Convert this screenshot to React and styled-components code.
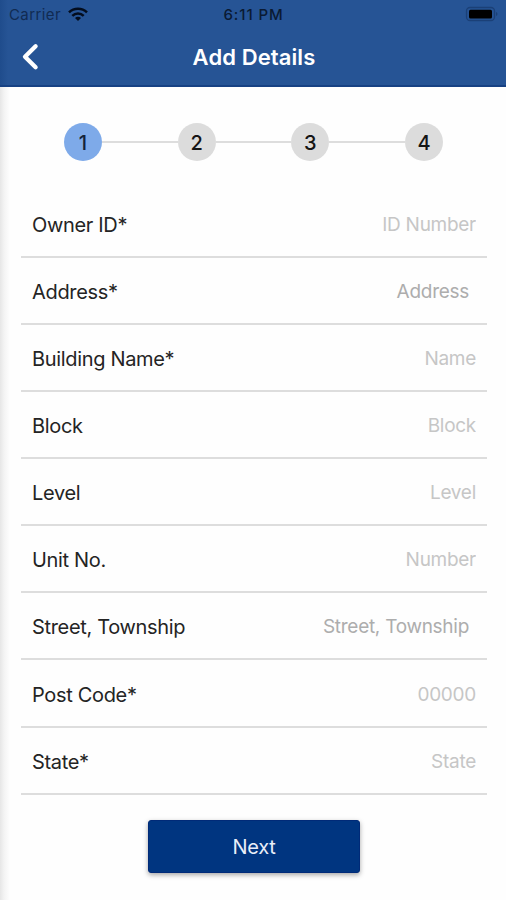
import styled, { createGlobalStyle } from 'styled-components';

const GlobalStyle = createGlobalStyle`
	* {
		box-sizing: border-box;
	}

	body {
		margin: 0;
		background: #fefefe;
		font-family: Inter, 'Liberation Sans', sans-serif;
	}
`;

const Screen = styled.main`
	width: 100%;
	height: 900px;
	overflow: hidden;
	background: linear-gradient(to right, #e6e6e6 0, #f3f3f3 4px, #fefefe 10px);
`;

const Header = styled.header`
	height: 87px;
	background: linear-gradient(to right, #1f4c8c 0, #265495 8px);
	border-bottom: 2px solid #174183;
`;

const StatusBar = styled.div`
	display: grid;
	grid-template-columns: 1fr auto 1fr;
	align-items: center;
	height: 28px;
	padding: 0 8px 0 9px;

	font-size: 15px;
	line-height: 28px;
	color: #0a1a33;
`;

const Carrier = styled.div`
	display: flex;
	align-items: center;
	gap: 7px;
	padding-top: 1px;

	color: #112b52;
	letter-spacing: .4px;

	svg {
		margin-top: -2px;
	}
`;

const Clock = styled.div`
	padding-top: 1px;
	font-weight: 500;
	letter-spacing: .9px;
`;

const Battery = styled.svg`
	justify-self: end;
	margin-top: -1px;
`;

const NavBar = styled.div`
	display: grid;
	grid-template-columns: 60px 1fr 60px;
	align-items: center;
	height: 57px;
`;

const BackButton = styled.button`
	display: flex;
	padding: 0 0 0 20px;
	border: 0;
	background: transparent;
	color: white;
	cursor: pointer;
`;

const Title = styled.h1`
	margin: 0;
	padding: 1px 0 0 2px;
	font-size: 22px;
	font-weight: 600;
	letter-spacing: .1px;
	text-align: center;
	color: white;
`;

const Steps = styled.div`
	display: flex;
	align-items: center;
	height: 38px;
	margin: 36px 63px 29.5px 64px;
`;

const Step = styled.div`
	width: 38px;
	height: 38px;
	border-radius: 50%;
	background: ${props => props.$active ? '#7eaae9' : '#dcdcdc'};

	font-size: 20px;
	font-weight: 450;
	line-height: 40px;
	text-align: center;
	color: ${props => props.$active ? '#14243c' : '#151515'};
`;

const StepLine = styled.div`
	flex: 1;
	height: 2px;
	background: #dddddd;
`;

const Form = styled.form`
	padding: 0 19px 0 21px;
`;

const Field = styled.label`
	display: flex;
	align-items: center;
	justify-content: space-between;
	height: 67.15px;
	padding: 3px ${props => props.$inset ? '18px' : '11px'} 0 11px;
	border-bottom: 2px solid #dddddd;
`;

const Label = styled.span`
	font-size: 20px;
	letter-spacing: -.33px;
	white-space: nowrap;
	color: #242424;
`;

const Input = styled.input`
	outline: none;

	width: 200px;
	padding: 0 0 1px;
	border: 0;
	background: transparent;
	font-family: inherit;
	font-size: 19px;
	letter-spacing: -.28px;
	text-align: right;

	&::placeholder {
		color: ${props => props.$dark ? '#adadad' : '#c6c6c6'};
		opacity: 1;
	}
`;

const Button = styled.button`
	display: block;
	width: 212px;
	height: 53px;
	margin: 25.5px 0 0 127px;
	padding: 0;
	border: 1px solid #002a78;
	border-radius: 3px;
	background: #003580;
	box-shadow: 0 2px 5px rgba(0, 0, 0, .35);

	font-family: inherit;
	font-size: 20px;
	letter-spacing: -.3px;
	color: #e9eef8;
	cursor: pointer;
`;

const WifiIcon = () => (
	<svg width="20" height="15" viewBox="0 0 20 15" fill="none" stroke="#030d1e" strokeWidth="2.5">
		<path d="M1 5.3C6 .4 14 .4 19 5.3" />
		<path d="M4.3 8.8C7.5 5.7 12.5 5.7 15.7 8.8" />
		<path d="M7 10.9C8.7 9.4 11.3 9.4 13 10.9L10 14Z" fill="#030d1e" stroke="none" />
	</svg>
);

const BatteryIcon = () => (
	<Battery width="33" height="16" viewBox="0 0 33 16">
		<rect x="1.5" y="1.5" width="28" height="13" rx="3.5" fill="none" stroke="#1b4077" strokeWidth="1.3" />
		<rect x="4" y="3.7" width="23" height="8.8" rx="1.5" fill="#000" />
		<path d="M31 6v4q1.5-.6 1.5-2T31 6" fill="#1b4077" />
	</Battery>
);

const BackIcon = () => (
	<svg width="20" height="28" viewBox="0 0 20 28" fill="none" stroke="currentColor" strokeWidth="4.3" strokeLinecap="round" strokeLinejoin="round">
		<path d="M15.6 3.3L5 13.7L15.6 24.2" />
	</svg>
);

const fields = [
	{ label: 'Owner ID*', placeholder: 'ID Number' },
	{ label: 'Address*', placeholder: 'Address', multiline: true },
	{ label: 'Building Name*', placeholder: 'Name' },
	{ label: 'Block', placeholder: 'Block' },
	{ label: 'Level', placeholder: 'Level' },
	{ label: 'Unit No.', placeholder: 'Number' },
	{ label: 'Street, Township', placeholder: 'Street, Township', multiline: true },
	{ label: 'Post Code*', placeholder: '00000' },
	{ label: 'State*', placeholder: 'State' },
];

const App = () => {
	return (
		<>
			<GlobalStyle />
			<Screen>
				<Header>
					<StatusBar>
						<Carrier>Carrier <WifiIcon /></Carrier>
						<Clock>6:11 PM</Clock>
						<BatteryIcon />
					</StatusBar>

					<NavBar>
						<BackButton aria-label="Back"><BackIcon /></BackButton>
						<Title>Add Details</Title>
					</NavBar>
				</Header>

				<Steps>
					<Step $active>1</Step>
					<StepLine />
					<Step>2</Step>
					<StepLine />
					<Step>3</Step>
					<StepLine />
					<Step>4</Step>
				</Steps>

				<Form>
					{fields.map(({ label, placeholder, multiline }) => (
						<Field key={label} $inset={multiline}>
							<Label>{label}</Label>
							<Input type="text" placeholder={placeholder} $dark={multiline} />
						</Field>
					))}

					<Button onClick={e => e.preventDefault()}>Next</Button>
				</Form>
			</Screen>
		</>
	)
}

export default App;
